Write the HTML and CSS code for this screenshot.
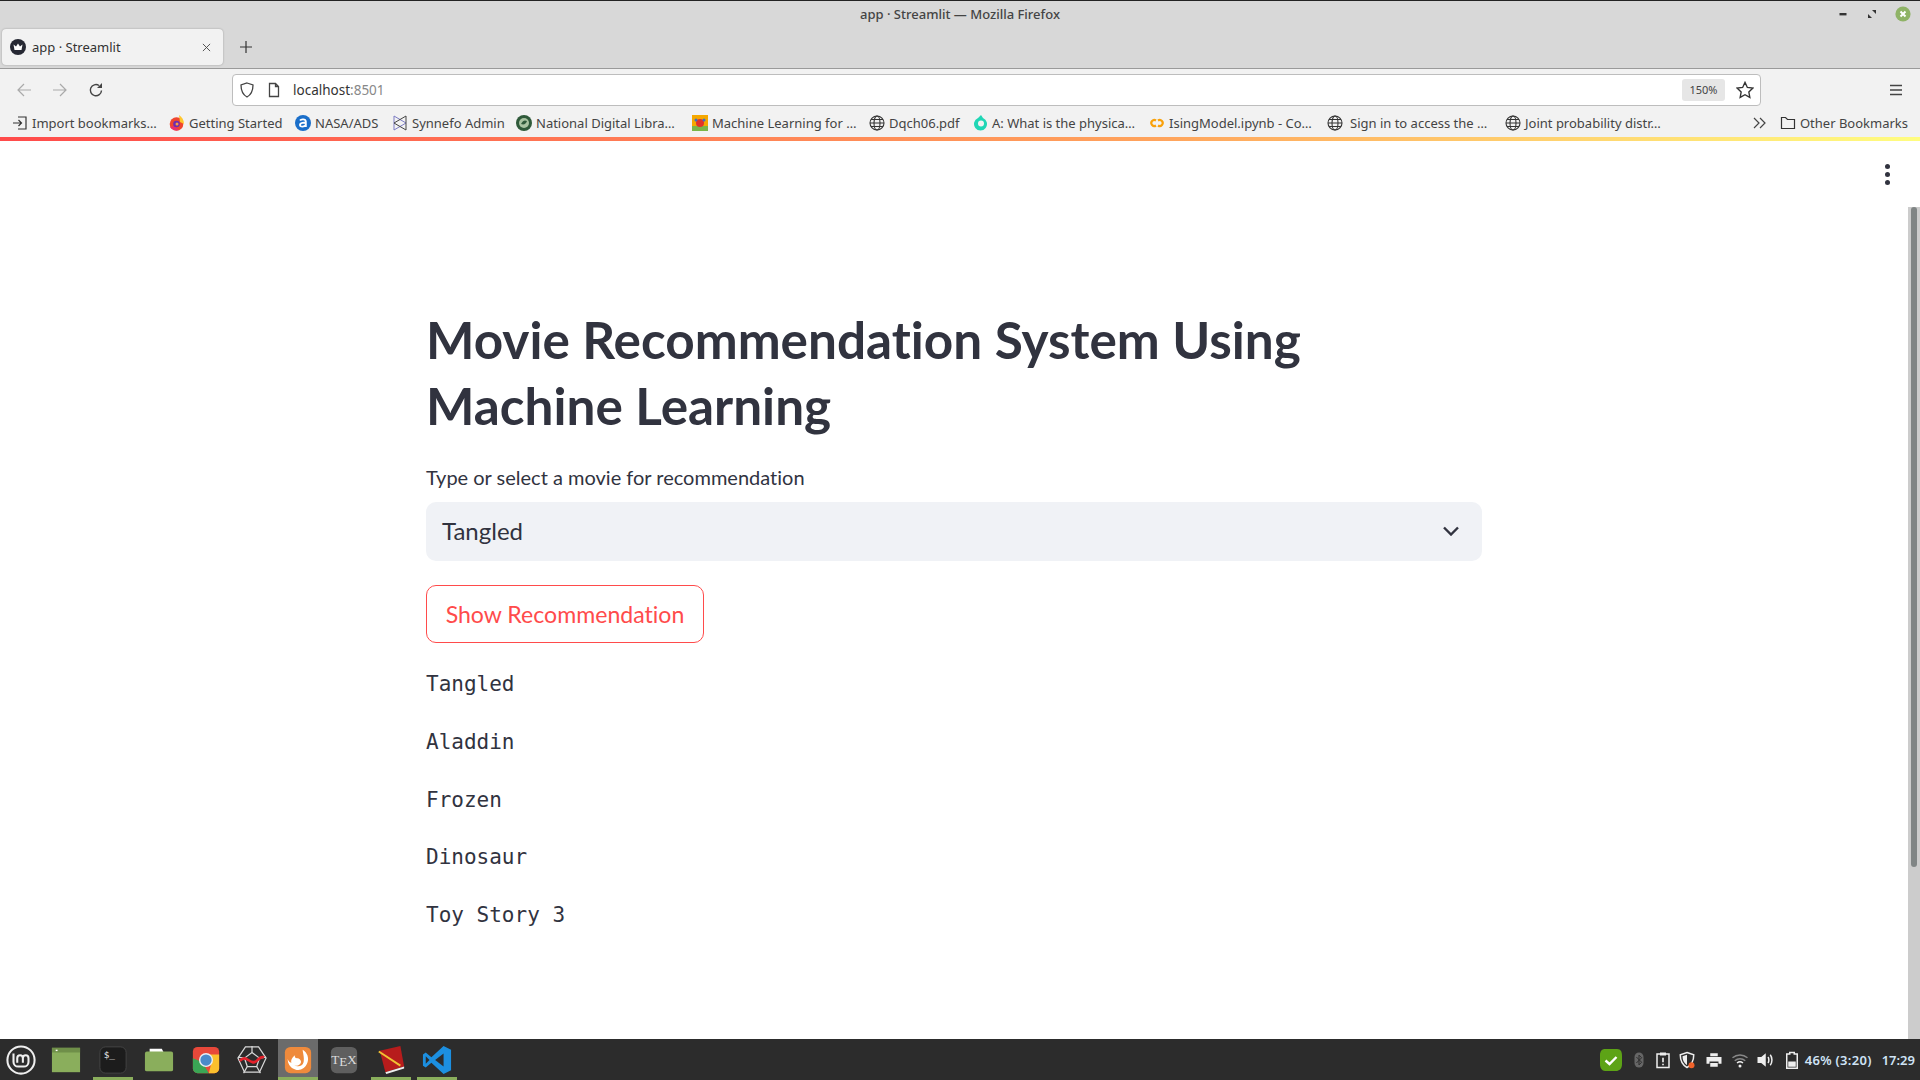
FILE: index.html
```html
<!DOCTYPE html>
<html lang="en">
<head>
  <meta charset="UTF-8">
  <title>app · Streamlit — Mozilla Firefox</title>
  <link rel="stylesheet" href="styles.css">
</head>
<body>
  <header class="titlebar">
    <div class="title-row">
      <span class="window-title">app · Streamlit — Mozilla Firefox</span>
      <div class="window-btns">
        <svg class="win-icon" viewBox="0 0 12 12"><rect x="2.500" y="5" width="7" height="2.400" fill="#333"/></svg>
        <svg class="win-icon" viewBox="0 0 12 12"><path d="M2 10V6l4 4zM10 2v4L6 2z" fill="#333"/></svg>
        <svg class="win-close" viewBox="0 0 16 16"><circle cx="8" cy="8" r="7.600" fill="#8fb366"/><path d="M5.500 5.500l5 5M10.500 5.500l-5 5" stroke="#fff" stroke-width="2"/></svg>
      </div>
    </div>
    <div class="tab-row">
      <div class="tab">
        <svg class="fav" viewBox="0 0 16 16"><circle cx="8" cy="8" r="8" fill="#262833"/><path d="M3.500 5.500l2.500 2 2-3 2 3 2.500-2-1 5.500h-7z" fill="#fff"/></svg>
        <span class="tab-label">app · Streamlit</span>
        <svg class="tab-close" viewBox="0 0 10 10"><path d="M1 1l8 8M9 1l-8 8" stroke="#444" stroke-width="1"/></svg>
      </div>
      <svg class="new-tab" viewBox="0 0 12 12"><path d="M6 0v12M0 6h12" stroke="#333" stroke-width="1.200"/></svg>
    </div>
  </header>

  <nav class="toolbar">
    <svg class="nav-icon" viewBox="0 0 16 16"><path d="M15 8H2M8 2L2 8l6 6" fill="none" stroke="#aaa" stroke-width="1.200"/></svg>
    <svg class="nav-icon" viewBox="0 0 16 16"><path d="M1 8h13M8 2l6 6-6 6" fill="none" stroke="#aaa" stroke-width="1.200"/></svg>
    <svg class="nav-icon" viewBox="0 0 16 16"><path d="M13.500 8.500A5.600 5.600 0 1 1 11 3.500" fill="none" stroke="#444" stroke-width="1.400"/><path d="M14 1v5H9z" fill="#444"/></svg>
    <div class="urlbar">
      <svg class="url-icon" viewBox="0 0 16 16"><path d="M8 1l6 2c0 6-1.500 9.500-6 12C3.500 12.500 2 9 2 3z" fill="none" stroke="#444" stroke-width="1.300"/></svg>
      <svg class="url-icon" viewBox="0 0 16 16"><path d="M3.500 1.500h6l3 3v10h-9zM9.500 1.500v3h3" fill="none" stroke="#444" stroke-width="1.300"/></svg>
      <span class="url-text">localhost<span class="url-port">:8501</span></span>
      <span class="zoom-level">150%</span>
      <svg class="star" viewBox="0 0 16 16"><path d="M8 1.200l2.100 4.500 4.900.6-3.600 3.400.9 4.900L8 12.200l-4.300 2.400.9-4.900L1 6.300l4.900-.6z" fill="none" stroke="#333" stroke-width="1.200"/></svg>
    </div>
    <svg class="menu-icon" viewBox="0 0 14 12"><path d="M1 1.500h12M1 6h12M1 10.500h12" stroke="#444" stroke-width="1.300"/></svg>
  </nav>

  <div class="bookmarks">
    <a class="bm bm-import">
      <svg class="bm-icon" viewBox="0 0 16 16"><path d="M6 2h8v12H6M1 8h8M6.500 5l3 3-3 3" fill="none" stroke="#333" stroke-width="1.200"/></svg>Import bookmarks…</a>
    <a class="bm bm-start">
      <svg class="bm-icon" viewBox="0 0 16 16"><circle cx="7.500" cy="9" r="6.800" fill="#f0462f"/><path d="M10 0c3 2 5 5 5 9l-4-2z" fill="#ffc72e"/><path d="M1 12c2 3 6 4 9 3l-5-4z" fill="#e8306f"/><circle cx="7.500" cy="9" r="3.300" fill="#6d2db0"/><circle cx="8" cy="9" r="1.500" fill="#f9a03f"/></svg>Getting Started</a>
    <a class="bm bm-nasa">
      <svg class="bm-icon" viewBox="0 0 16 16"><circle cx="8" cy="8" r="8" fill="#1a6ec9"/><path d="M5 5.500c1-1.500 5.500-1.800 5.800 1V12M10.800 8c-1.500-.5-5.800-.5-5.800 2 0 2.300 4.500 2 5.800 0" fill="none" stroke="#fff" stroke-width="1.900"/></svg>NASA/ADS</a>
    <a class="bm bm-syn">
      <svg class="bm-icon" viewBox="0 0 16 16"><path d="M2 1l12 7L2 15z" fill="none" stroke="#7c7cc4" stroke-width="1"/><path d="M14 1L2 8l12 7z" fill="none" stroke="#444" stroke-width="1"/></svg>Synnefo Admin</a>
    <a class="bm bm-ndl">
      <svg class="bm-icon" viewBox="0 0 16 16"><circle cx="8" cy="8" r="8" fill="#2f5a3a"/><circle cx="8" cy="8" r="5" fill="#a9c4a2"/><path d="M5 9c2-4 4-4 6-3-1 3-3 4-6 3z" fill="#2f5a3a"/></svg>National Digital Libra…</a>
    <a class="bm bm-ml">
      <svg class="bm-icon" viewBox="0 0 16 16"><rect width="16" height="16" fill="#f5a800"/><rect y="11" width="16" height="5" fill="#7ab648"/><circle cx="8" cy="8" r="4" fill="#e0342b"/><circle cx="4" cy="5" r="1.500" fill="#3e6fc4"/><circle cx="12" cy="5" r="1.500" fill="#3e6fc4"/></svg>Machine Learning for …</a>
    <a class="bm bm-dq">
      <svg class="bm-icon" viewBox="0 0 16 16"><use href="#globe"/></svg>Dqch06.pdf</a>
    <a class="bm bm-phys">
      <svg class="bm-icon" viewBox="0 0 16 16"><path d="M9 0l2 3a6.500 6.500 0 1 1-5 0z" fill="#20d6b5"/><circle cx="9" cy="8.500" r="3" fill="#f2f2f2"/></svg>A: What is the physica…</a>
    <a class="bm bm-ising">
      <svg class="bm-icon" viewBox="0 0 16 16"><path d="M7 5.500a3 3 0 1 0 0 5M9 5.500a3 3 0 1 1 0 5" fill="none" stroke="#f9a10a" stroke-width="2.200"/></svg>IsingModel.ipynb - Co…</a>
    <a class="bm bm-sign">
      <svg class="bm-icon" viewBox="0 0 16 16"><use href="#globe"/></svg>Sign in to access the …</a>
    <a class="bm bm-joint">
      <svg class="bm-icon" viewBox="0 0 16 16"><use href="#globe"/></svg>Joint probability distr…</a>
    <div class="bm-end">
      <svg class="bm-more" viewBox="0 0 14 12"><path d="M1 1l5 5-5 5M7 1l5 5-5 5" fill="none" stroke="#444" stroke-width="1.200"/></svg>
      <a class="bm bm-other">
        <svg class="bm-icon" viewBox="0 0 16 16"><path d="M1.500 13.500v-11h4l2 2h7v9z" fill="none" stroke="#333" stroke-width="1.200"/></svg>Other Bookmarks</a>
    </div>
  </div>
  <div class="loadbar"></div>

  <svg class="defs" width="0" height="0">
    <symbol id="globe" viewBox="0 0 16 16">
      <g fill="none" stroke="#333" stroke-width="1.100">
        <circle cx="8" cy="8" r="7"/><ellipse cx="8" cy="8" rx="3" ry="7"/><path d="M1 8h14M2 4.500h12M2 11.500h12"/>
      </g>
    </symbol>
  </svg>

  <main class="page">
    <div class="app-scroll">
      <div class="app-menu"><span></span><span></span><span></span></div>
      <div class="block">
        <h1>Movie Recommendation System Using Machine Learning</h1>
        <label class="field-label">Type or select a movie for recommendation</label>
        <div class="select">
          <span class="select-value">Tangled</span>
          <svg class="chevron" viewBox="0 0 18 10"><path d="M2 1.500l7 7 7-7" fill="none" stroke="#31333f" stroke-width="2.400"/></svg>
        </div>
        <button class="btn">Show Recommendation</button>
        <div class="results">
          <p>Tangled</p>
          <p>Aladdin</p>
          <p>Frozen</p>
          <p>Dinosaur</p>
          <p>Toy Story 3</p>
        </div>
      </div>
    </div>
    <div class="scrollbar"><div class="thumb"></div></div>
  </main>

  <footer class="taskbar">
    <div class="launchers">
      <div class="launcher">
        <svg viewBox="0 0 32 32"><circle cx="16" cy="16" r="14.500" fill="none" stroke="#eee" stroke-width="2.200"/><path d="M8 9v9a5 5 0 0 0 5 5h6a5 5 0 0 0 5-5v-4a3 3 0 0 0-6 0v5M18 14a3 3 0 0 0-6 0v5" fill="none" stroke="#eee" stroke-width="2.200"/></svg>
      </div>
      <div class="launcher">
        <svg viewBox="0 0 32 32"><rect x="1" y="3" width="30" height="26" fill="#8aae5c"/><rect x="1" y="3" width="30" height="5" fill="#6f8f49"/><rect x="5" y="5" width="2" height="1.500" fill="#fff"/></svg>
      </div>
      <div class="launcher open">
        <svg viewBox="0 0 32 32"><rect x="2" y="2" width="28" height="28" rx="6" fill="#1c1c1c" stroke="#444"/><text x="6" y="14" class="term-glyph">$_</text></svg>
      </div>
      <div class="launcher">
        <svg viewBox="0 0 32 32"><path d="M6 8V4h13l2 4z" fill="#fff"/><rect x="1" y="7" width="30" height="21" rx="2" fill="#8aae5c"/></svg>
      </div>
      <div class="launcher">
        <svg viewBox="0 0 32 32"><rect x="2" y="2" width="28" height="28" rx="5" fill="#e8483a"/><path d="M2 14V25a5 5 0 0 0 5 5h12l-7-12z" fill="#3aa655"/><path d="M16 10h14v15a5 5 0 0 1-5 5h-6l3-12z" fill="#fbc02d"/><circle cx="16" cy="16" r="7.500" fill="#e9eef2"/><circle cx="16" cy="16" r="6" fill="#4a8ac9"/></svg>
      </div>
      <div class="launcher">
        <svg viewBox="0 0 32 32"><g fill="none" stroke="#d8d8d8" stroke-width="1.300"><path d="M16 8l8 6-3 9H11l-3-9z"/><path d="M9 2h14l8 12-7 15H8L1 14z"/><path d="M16 8V1M24 14l7-1M21 23l4 7M11 23l-4 7M8 14l-7-1"/></g><path d="M3 17c4-4 6-3 9-1s6 4 9 1 5-5 8-4" fill="none" stroke="#e5202a" stroke-width="2.800"/></svg>
      </div>
      <div class="launcher active open">
        <svg viewBox="0 0 32 32"><rect x="2" y="2" width="28" height="28" rx="6" fill="#ef8a3c"/><path d="M21 5c5 3 7 9 5 14-2 6-8 9-13 7-5-1-8-6-8-11 1 3 3 4 4 4-1-3 1-6 4-8-1 2 0 3 2 3 3 0 5 3 4 5-1 3-5 4-7 2 3 3 9 2 10-3 1-5-1-10-1-13z" fill="#fff"/></svg>
      </div>
      <div class="launcher">
        <svg viewBox="0 0 32 32"><rect x="2" y="2" width="28" height="28" rx="6" fill="#5f5f5f"/><text x="16" y="20" class="tex-glyph">T<tspan dy="2">E</tspan><tspan dy="-2">X</tspan></text></svg>
      </div>
      <div class="launcher open">
        <svg viewBox="0 0 32 32"><path d="M4 6L26 1l4 22-20 6z" fill="#b71c1c"/><path d="M10 29l20-6v2L11 31z" fill="#eee"/><path d="M3 7l23 15" stroke="#f1c232" stroke-width="2"/></svg>
      </div>
      <div class="launcher open">
        <svg viewBox="0 0 32 32"><path d="M23 1l8 4v22l-8 4-13-12-6 5-3-2v-12l3-2 6 5z" fill="#1c8fe0"/><path d="M23 9l-9 7 9 7z" fill="#2c2c2c"/><path d="M4 12l4 4-4 4z" fill="#2c2c2c"/></svg>
      </div>
    </div>
    <div class="tray">
      <svg class="tray-icon tray-check" viewBox="0 0 24 24"><path d="M6 1h12c4 0 5 3 5 7v8c0 5-3 7-6 7H6c-3 0-5-3-5-7V7c0-4 2-6 5-6z" fill="#5da316"/><path d="M6.500 12.500l4 3.500 7-7" fill="none" stroke="#fff" stroke-width="2.400"/></svg>
      <svg class="tray-icon tray-bt" viewBox="0 0 24 24"><rect x="6" y="2" width="12" height="20" rx="6" fill="#666"/><path d="M8.500 8l7 7-3.500 3.500v-13l3.500 3.500-7 7" fill="none" stroke="#2c2c2c" stroke-width="1.300"/></svg>
      <svg class="tray-icon tray-clip" viewBox="0 0 24 24"><path d="M8 4H4v18h16V4h-4" fill="none" stroke="#eee" stroke-width="2"/><rect x="8" y="2" width="8" height="4" fill="#eee"/><path d="M12 9v6M12 17v2" stroke="#eee" stroke-width="2.200"/></svg>
      <svg class="tray-icon tray-shield" viewBox="0 0 24 24"><path d="M12 2l9 3c0 8-2 13-9 17C5 18 3 13 3 5z" fill="none" stroke="#eee" stroke-width="2"/><path d="M12 5v14c-4-3-6-6-6-12z" fill="#eee"/><circle cx="18" cy="19" r="4" fill="#f0622a"/></svg>
      <svg class="tray-icon tray-print" viewBox="0 0 24 24"><path d="M7 3h10v4H7zM2 8h20v9h-4v-3H6v3H2zM7 16h10v5H7z" fill="#eee"/></svg>
      <svg class="tray-icon tray-wifi" viewBox="0 0 24 24"><path d="M2 9c6-5 14-5 20 0M5 13c4-3.500 10-3.500 14 0" fill="none" stroke="#888" stroke-width="2"/><path d="M8 16c2.500-2 5.500-2 8 0" fill="none" stroke="#eee" stroke-width="2"/><circle cx="12" cy="20" r="2" fill="#eee"/></svg>
      <svg class="tray-icon tray-vol" viewBox="0 0 24 24"><path d="M2 8h5l6-5v18l-6-5H2z" fill="#eee"/><path d="M16 8c1.500 2 1.500 6 0 8M19 5c3 4 3 10 0 14" fill="none" stroke="#eee" stroke-width="2"/></svg>
      <svg class="tray-icon tray-batt" viewBox="0 0 24 24"><path d="M9 2h6v2h4v19H5V4h4z" fill="none" stroke="#eee" stroke-width="2"/><rect x="7" y="14" width="10" height="7" fill="#eee"/></svg>
      <span class="tray-text">46% (3:20)</span>
      <span class="tray-clock">17:29</span>
    </div>
  </footer>
</body>
</html>
```

FILE: styles.css
```css
* {
  box-sizing: border-box;
}
html, body {
  height: 100%;
}
body {
  margin: 0;
  display: flex;
  flex-direction: column;
  height: 100vh;
  overflow: hidden;
  background: #fff;
  font-family: "Noto Sans", sans-serif;
  color: #31333f;
}
svg {
  display: block;
  flex: none;
}
.defs {
  position: absolute;
}

/* window title and tabs */
.titlebar {
  height: 69px;
  flex: none;
  background: #d8d8d8;
  border-top: 1px solid #222;
  border-bottom: 1px solid #9a9a9a;
  display: flex;
  flex-direction: column;
}
.title-row {
  height: 28px;
  flex: none;
  display: flex;
  align-items: center;
  justify-content: center;
  position: relative;
}
.window-title {
  font-size: 13px;
  font-weight: 500;
  color: #444;
  margin-top: -2px;
}
.window-btns {
  position: absolute;
  right: 9px;
  top: 5px;
  display: flex;
  align-items: center;
  gap: 17px;
}
.win-icon {
  width: 12px;
  height: 12px;
}
.win-close {
  width: 16px;
  height: 16px;
}
.tab-row {
  display: flex;
  align-items: center;
  padding-left: 2px;
}
.tab {
  width: 221px;
  height: 36px;
  background: #f2f2f2;
  border-radius: 4px;
  box-shadow: 0 0 2px rgba(0,0,0,0.3);
  display: flex;
  align-items: center;
  padding: 0 12px 0 8px;
}
.fav {
  width: 16px;
  height: 16px;
}
.tab-label {
  font-size: 13px;
  color: #333;
  margin-left: 6px;
  flex: 1;
}
.tab-close {
  width: 9px;
  height: 9px;
}
.new-tab {
  width: 12px;
  height: 12px;
  margin-left: 17px;
}

/* nav bar */
.toolbar {
  height: 41px;
  flex: none;
  background: #f2f2f2;
  display: flex;
  align-items: center;
  padding: 0 17px 0 16px;
}
.nav-icon {
  width: 16px;
  height: 16px;
  margin-right: 20px;
}
.urlbar {
  width: 1529px;
  height: 32px;
  margin-left: 108px;
  background: #fff;
  border: 1px solid #bdbdbd;
  border-radius: 4px;
  display: flex;
  align-items: center;
  padding: 0 6px 0 6px;
}
.url-icon {
  width: 16px;
  height: 16px;
  margin-right: 11px;
}
.url-icon + .url-icon {
  margin-right: 12px;
}
.url-text {
  font-size: 13.500px;
  color: #333;
  flex: 1;
  margin-left: -1px;
}
.url-port {
  color: #888;
}
.zoom-level {
  width: 43px;
  height: 22px;
  background: #e6e6e6;
  border-radius: 3px;
  font-size: 11px;
  color: #444;
  display: flex;
  align-items: center;
  justify-content: center;
}
.star {
  width: 18px;
  height: 18px;
  margin-left: 11px;
}
.menu-icon {
  width: 14px;
  height: 12px;
  margin-left: auto;
}

/* bookmarks */
.bookmarks {
  height: 27px;
  flex: none;
  background: #f2f2f2;
  display: flex;
  align-items: center;
  padding: 0 0 1px 12px;
  font-size: 13px;
  color: #444;
  white-space: nowrap;
}
.bm {
  display: flex;
  align-items: center;
  gap: 4px;
  flex: none;
}
.bm-icon {
  width: 16px;
  height: 16px;
}
.bm-import { width: 157px; }
.bm-start { width: 126px; }
.bm-nasa { width: 97px; }
.bm-syn { width: 124px; }
.bm-ndl { width: 176px; }
.bm-ml { width: 177px; }
.bm-dq { width: 103px; }
.bm-phys { width: 177px; }
.bm-ising { width: 178px; }
.bm-sign { width: 178px; gap: 7px; }
.bm-end {
  margin-left: auto;
  display: flex;
  align-items: center;
  gap: 13px;
  padding-right: 12px;
}
.bm-more {
  width: 14px;
  height: 12px;
}
.loadbar {
  height: 4px;
  flex: none;
  background: linear-gradient(to right, #ff4b4b, #ffa35c 60%, #fffd80);
}

/* streamlit page */
.page {
  flex: 1;
  display: flex;
  min-height: 0;
  position: relative;
}
.app-scroll {
  flex: 1;
  padding: 165px 0 0 426px;
}
.app-menu {
  position: absolute;
  top: 23px;
  right: 30px;
  display: flex;
  flex-direction: column;
  gap: 3px;
}
.app-menu span {
  width: 5px;
  height: 5px;
  border-radius: 50%;
  background: #31333f;
}
.block {
  width: 1056px;
}
h1 {
  margin: 0;
  font-family: "Lato", sans-serif;
  font-variant-ligatures: none;
  font-size: 51.300px;
  font-weight: 700;
  line-height: 66px;
  color: #31333f;
  width: 900px;
}
.field-label {
  display: block;
  margin-top: 24px;
  font-family: "Lato", sans-serif;
  font-variant-ligatures: none;
  font-size: 20px;
  line-height: 30px;
}
.select {
  margin-top: 10px;
  height: 59px;
  background: #f0f2f6;
  border-radius: 10px;
  display: flex;
  align-items: center;
  justify-content: space-between;
  padding: 0 22px 0 16px;
  font-family: "Lato", sans-serif;
  font-size: 24px;
}
.select-value {
  margin-top: -2px;
}
.chevron {
  width: 18px;
  height: 10px;
  margin-top: -2px;
}
.btn {
  display: block;
  margin-top: 24px;
  width: 278px;
  height: 58px;
  background: #fff;
  border: 1px solid #ff4b4b;
  border-radius: 10px;
  color: #ff4b4b;
  font-family: "Lato", sans-serif;
  font-variant-ligatures: none;
  font-size: 23.100px;
}
.results {
  margin-top: 25px;
  padding-top: 1px;
  font-family: "DejaVu Sans Mono", monospace;
  font-size: 21px;
  color: #31333f;
}
.results p {
  margin: 0;
  height: 57.800px;
  line-height: 30px;
}
.scrollbar {
  width: 12px;
  flex: none;
  margin-top: 66px;
  padding: 0 3px;
  background: #cccccc;
}
.thumb {
  height: 660px;
  background: #808585;
  border-radius: 3px;
}

/* panel */
.taskbar {
  height: 41px;
  flex: none;
  background: #2c2c2c;
  display: flex;
  align-items: stretch;
  justify-content: space-between;
}
.launchers {
  display: flex;
}
.launcher {
  width: 40px;
  margin-right: 6.250px;
  display: flex;
  align-items: center;
  justify-content: center;
  border-bottom: 3px solid transparent;
  padding-top: 3px;
}
.launcher:first-child {
  width: 41px;
  margin-right: 5px;
}
.launcher:nth-child(2) {
  margin-right: 7px;
}
.launcher svg {
  width: 30px;
  height: 30px;
}
.launcher.open {
  border-bottom-color: #8aae5c;
}
.launcher.active {
  background: #6b6b6b;
}
.term-glyph {
  font-family: "DejaVu Sans Mono", monospace;
  font-size: 10px;
  fill: #eee;
}
.tex-glyph {
  font-family: "Liberation Serif", serif;
  font-size: 14px;
  fill: #ddd;
  text-anchor: middle;
}
.tray {
  display: flex;
  align-items: center;
  padding-right: 5px;
  color: #cfe3f5;
  font-size: 13px;
  font-weight: 600;
}
.tray-icon {
  width: 18px;
  height: 18px;
}
.tray-check {
  width: 24px;
  height: 24px;
  margin-right: 7px;
}
.tray-bt, .tray-clip {
  margin-right: 6px;
}
.tray-shield, .tray-vol {
  margin-right: 9px;
}
.tray-print {
  margin-right: 8px;
}
.tray-wifi {
  margin-right: 7px;
}
.tray-batt {
  margin-right: 4px;
}
.tray-text {
  margin-right: 10px;
  letter-spacing: 0.3px;
}
```
